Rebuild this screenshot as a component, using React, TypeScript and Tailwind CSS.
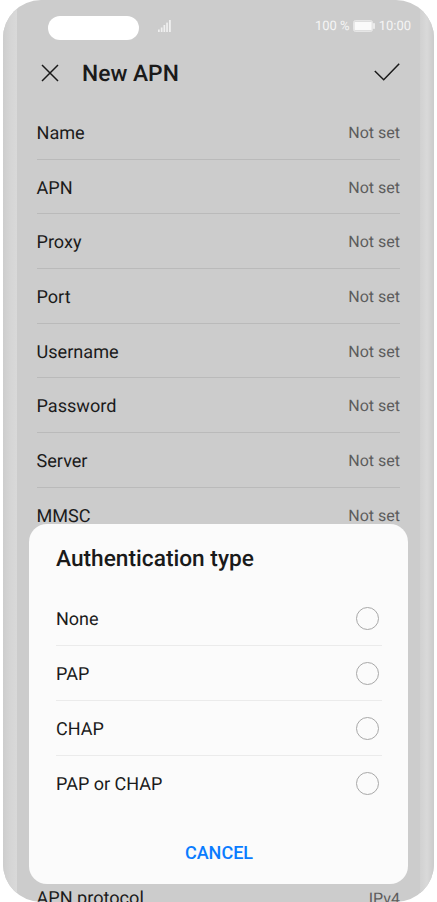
const fields = ['Name', 'APN', 'Proxy', 'Port', 'Username', 'Password', 'Server', 'MMSC']

const authTypes = ['None', 'PAP', 'CHAP', 'PAP or CHAP']

type FieldRowProps = {
  label: string
  value: string
}

function FieldRow({ label, value }: FieldRowProps) {
  return (
    <div className="flex h-[54.7px] shrink-0 items-center justify-between border-b border-[#bababa] pt-[2px]">
      <span className="pt-[1.4px] text-[18.1px] text-[#1b1b1b]">{label}</span>
      <span className="pt-[0.4px] text-[16px] text-[#5c5c5c]">{value}</span>
    </div>
  )
}

function StatusBar() {
  return (
    <div className="flex h-[52px] shrink-0 items-center pr-[23px] pl-[45px] text-[#f5f5f5]">
      <div className="mt-1 h-6 w-[91px] rounded-full bg-white" />
      <svg className="ml-[19px]" width="13" height="12" viewBox="0 0 13 12" fill="#f0f0f0">
        <rect x="0" y="9.5" width="1.7" height="2.5" />
        <rect x="2.8" y="7.5" width="1.7" height="4.5" />
        <rect x="5.5" y="5" width="1.7" height="7" />
        <rect x="8.2" y="2.6" width="1.7" height="9.4" />
        <rect x="11" y="0" width="1.8" height="12" />
      </svg>
      <div className="ml-auto flex items-center text-[13px]">
        <span className="pt-[2px]">100 %</span>
        <svg className="mr-[4px] ml-[3px]" width="22" height="12" viewBox="0 0 22 12">
          <rect x="0.5" y="0.5" width="19" height="11" rx="2" fill="#dedede" stroke="#e6e6e6" />
          <rect x="1.6" y="2" width="17" height="8" rx="0.5" fill="#fafafa" />
          <rect x="20.2" y="3" width="1.6" height="6" rx="0.8" fill="#f3f3f3" />
        </svg>
        <span className="pt-[2px]">10:00</span>
      </div>
    </div>
  )
}

function AuthDialog() {
  return (
    <div className="absolute top-[524px] left-[26px] flex h-[360px] w-[379px] flex-col rounded-[18px] bg-[#fbfbfb] pr-[26px] pl-[27px]">
      <h2 className="mt-5 mb-[17px] text-[22.7px] leading-[30px] font-medium text-[#1a1a1a]">
        Authentication type
      </h2>
      {authTypes.map((type) => (
        <div
          key={type}
          className="flex h-[55px] items-center justify-between border-b border-[#ebebeb] pr-[3px] last-of-type:border-transparent"
        >
          <span className="pt-[3px] text-[18px] text-[#1b1b1b]">{type}</span>
          <span className="size-[23px] rounded-full border border-[#a8a8a8]" />
        </div>
      ))}
      <button className="mt-[30px] text-[18px] leading-6 font-medium text-[#0a7cff]">CANCEL</button>
    </div>
  )
}

export default function App() {
  return (
    <div className="h-[902px] w-[437px] overflow-hidden bg-white pl-[3px] font-['Roboto',sans-serif] [text-rendering:geometricPrecision]">
      <div className="relative flex h-[902px] w-[431px] flex-col overflow-hidden rounded-[38px] bg-[#cccccc]">
        {/* curved glass edges */}
        <div className="absolute inset-y-0 left-0 w-[14px] bg-linear-to-r from-[#cdcdcd] via-[#d5d5d5] to-[#d9d9d9]" />
        <div className="absolute inset-y-0 right-0 w-[14px] bg-linear-to-r from-[#d1d1d1] via-[#d9d9d9] to-[#cbcbcb]" />

        <div className="relative flex flex-col">
          <StatusBar />
          <div className="flex h-[53px] items-center pr-[34px] pb-[11px] pl-[38px]">
            <svg width="18" height="18" viewBox="0 0 18 18" fill="none" stroke="#1a1a1a" strokeWidth="1.5">
              <path d="M1 1l16 16M17 1L1 17" />
            </svg>
            <h1 className="mt-[3px] ml-[23px] text-[22.8px] font-medium text-[#1a1a1a]">New APN</h1>
            <svg
              className="mb-[2px] ml-auto"
              width="26"
              height="19"
              viewBox="0 0 26 19"
              fill="none"
              stroke="#1a1a1a"
              strokeWidth="1.5"
            >
              <path d="M.8 8l8.9 8.7L25.2.8" />
            </svg>
          </div>
          <div className="flex flex-col pr-[34px] pl-[33.5px]">
            {fields.map((label) => (
              <FieldRow key={label} label={label} value="Not set" />
            ))}
            <div className="h-[328px]" />
            <FieldRow label="APN protocol" value="IPv4" />
          </div>
        </div>

        <AuthDialog />
      </div>
    </div>
  )
}
